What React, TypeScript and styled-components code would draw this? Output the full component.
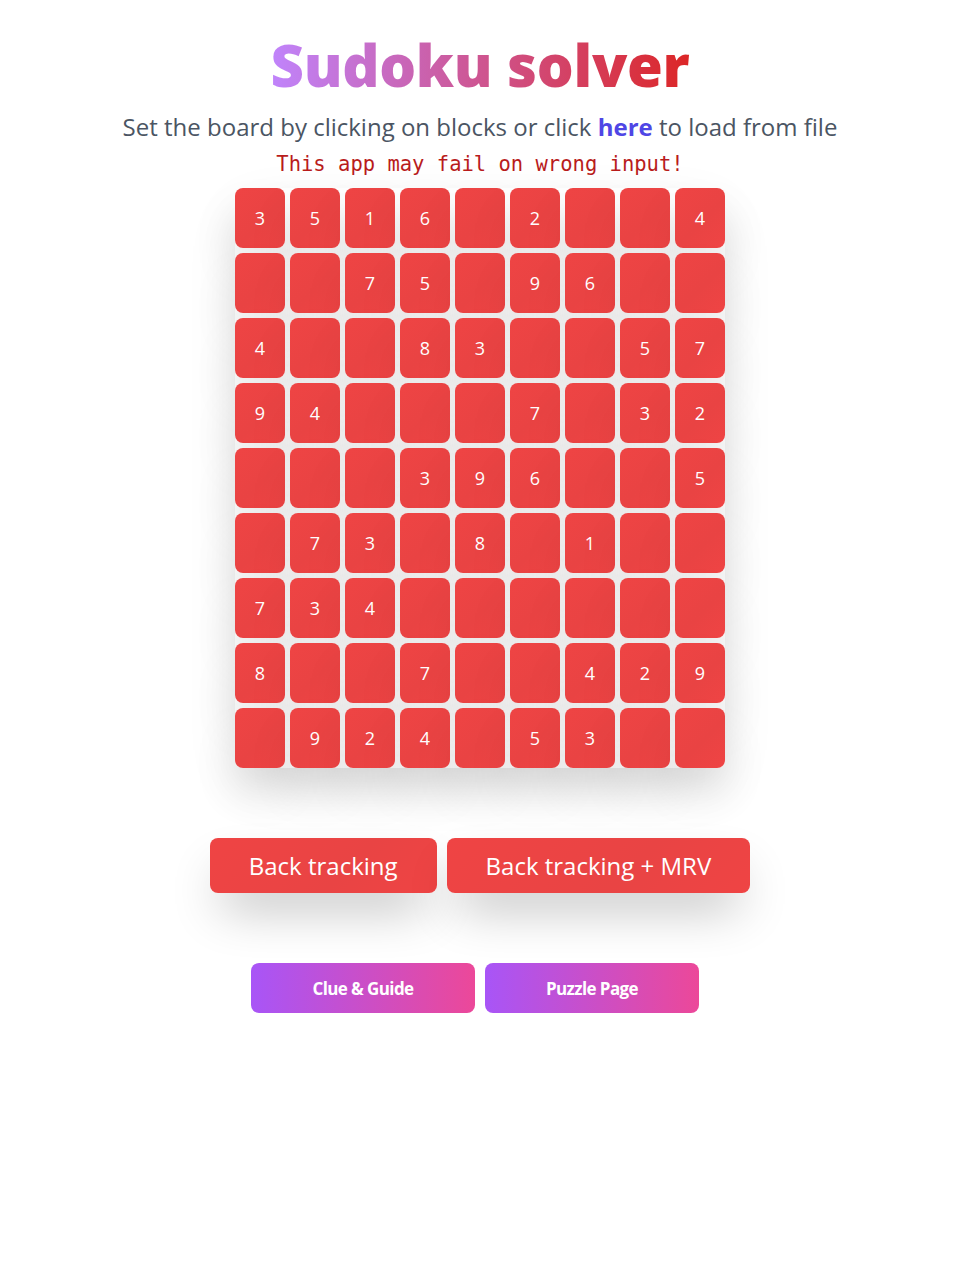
import React from "react";
import styled, { createGlobalStyle } from "styled-components";

const Global = createGlobalStyle`
  html, body { margin: 0; padding: 0; background: #ffffff; }
  body { font-family: "Segoe UI", "Open Sans", "Noto Sans", sans-serif; }
`;

const Page = styled.main`
  display: flex;
  flex-direction: column;
  align-items: center;
  padding-top: 29px;
`;

const Title = styled.h1`
  margin: 0;
  font-size: 58px;
  line-height: 72px;
  font-weight: 800;
  letter-spacing: -0.3px;
  background: linear-gradient(to right, #c084fc, #dc2626);
  -webkit-background-clip: text;
  background-clip: text;
  color: transparent;
`;

const Subtitle = styled.p`
  margin: 8px 0 0;
  font-size: 24px;
  line-height: 36px;
  color: #4b5563;
`;

const Link = styled.a`
  color: #4f46e5;
  font-weight: 700;
  text-decoration: none;
  cursor: pointer;
`;

const Warning = styled.p`
  margin: 4px 0 0;
  font-family: "DejaVu Sans Mono", "Liberation Mono", monospace;
  font-size: 20.5px;
  line-height: 30px;
  color: #b91c1c;
`;

const Board = styled.div`
  margin-top: 9px;
  display: grid;
  grid-template-columns: repeat(9, 50px);
  grid-auto-rows: 60px;
  gap: 5px;
  border-radius: 12px;
  box-shadow: 0 20px 60px -10px rgba(0, 0, 0, 0.12);
`;

const Cell = styled.button`
  border: none;
  padding: 0;
  border-radius: 8px;
  background: linear-gradient(135deg, #ef4444 0%, #e94343 55%, #ef4444 100%);
  color: #ffffff;
  font-family: "Segoe UI", "Open Sans", "Noto Sans", sans-serif;
  font-size: 18px;
  box-shadow: 0 25px 50px -12px rgba(0, 0, 0, 0.32);
  cursor: pointer;
`;

const Actions = styled.div`
  display: flex;
  gap: 10px;
  margin-top: 70px;
`;

const SolveButton = styled.button`
  height: 55px;
  padding: 0 39px;
  border: none;
  border-radius: 8px;
  background: linear-gradient(135deg, #ef4444 0%, #e94444 60%, #ef4444 100%);
  color: #ffffff;
  font-family: "Segoe UI", "Open Sans", "Noto Sans", sans-serif;
  font-size: 24px;
  box-shadow: 0 25px 50px -12px rgba(0, 0, 0, 0.3);
  cursor: pointer;
`;

const Links = styled.div`
  display: flex;
  gap: 10px;
  margin-top: 70px;
  padding-right: 10px;
`;

const PageButton = styled.button<{ $w: number }>`
  width: ${(p) => p.$w}px;
  height: 50px;
  border: none;
  border-radius: 8px;
  background: linear-gradient(to right, #a855f7, #ec4899);
  color: #ffffff;
  font-family: "Segoe UI", "Open Sans", "Noto Sans", sans-serif;
  font-size: 17px;
  font-weight: 700;
  letter-spacing: -0.6px;
  cursor: pointer;
`;

const grid = [
  "351602004",
  "007509600",
  "400830057",
  "940007032",
  "000396005",
  "073080100",
  "734000000",
  "800700429",
  "092405300",
];

export default function App() {
  return (
    <>
      <Global />
      <Page>
        <Title>Sudoku solver</Title>
        <Subtitle>
          Set the board by clicking on blocks or click <Link>here</Link> to load from file
        </Subtitle>
        <Warning>This app may fail on wrong input!</Warning>
        <Board>
          {grid.flatMap((row, r) =>
            row.split("").map((v, c) => (
              <Cell key={`${r}-${c}`}>{v === "0" ? "" : v}</Cell>
            ))
          )}
        </Board>
        <Actions>
          <SolveButton>Back tracking</SolveButton>
          <SolveButton>Back tracking + MRV</SolveButton>
        </Actions>
        <Links>
          <PageButton $w={224}>Clue &amp; Guide</PageButton>
          <PageButton $w={214}>Puzzle Page</PageButton>
        </Links>
      </Page>
    </>
  );
}
